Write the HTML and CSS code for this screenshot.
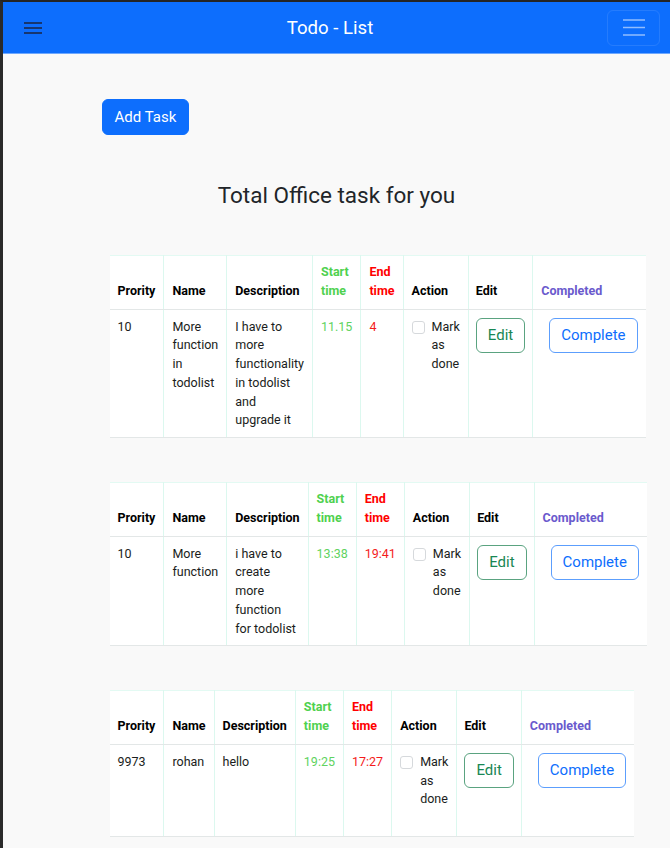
FILE: index.html
```html
<!DOCTYPE html>
<html lang="en">
<head>
<meta charset="utf-8">
<title>Todo - List</title>
<link rel="stylesheet" href="styles.css">
</head>
<body>
<nav class="navbar">
  <button class="menu-btn" aria-label="menu">
    <svg width="18" height="12" viewBox="0 0 18 12"><path d="M0 1h18M0 6h18M0 11h18" stroke="#1b2440" stroke-width="1.7" fill="none"/></svg>
  </button>
  <span class="brand">Todo - List</span>
  <button class="toggler" aria-label="toggle">
    <svg width="22" height="17" viewBox="0 0 22 17"><path d="M0 1h22M0 8.5h22M0 16h22" stroke="rgba(255,255,255,0.55)" stroke-width="1.7" fill="none"/></svg>
  </button>
</nav>

<main class="container">
  <button class="btn-add">Add Task</button>
  <h1 class="heading">Total Office task for you</h1>

  <div class="table-wrap">
    <table class="task-table">
      <thead>
        <tr>
          <th>Prority</th><th>Name</th><th>Description</th>
          <th class="c-start">Start time</th><th class="c-end">End time</th>
          <th>Action</th><th class="edit-col">Edit</th><th class="c-done">Completed</th>
        </tr>
      </thead>
      <tbody>
        <tr>
          <td>10</td><td>More function in todolist</td><td>I have to more functionality in todolist and upgrade it</td>
          <td class="c-start">11.15</td><td class="c-end">4</td>
          <td><div class="check"><span class="box"></span><span>Mark as done</span></div></td>
          <td class="edit-col"><button class="btn-edit">Edit</button></td>
          <td><button class="btn-complete">Complete</button></td>
        </tr>
      </tbody>
    </table>
  </div>

  <div class="table-wrap">
    <table class="task-table">
      <thead>
        <tr>
          <th>Prority</th><th>Name</th><th>Description</th>
          <th class="c-start">Start time</th><th class="c-end">End time</th>
          <th>Action</th><th class="edit-col">Edit</th><th class="c-done">Completed</th>
        </tr>
      </thead>
      <tbody>
        <tr>
          <td>10</td><td>More function</td><td>i have to create more function for todolist</td>
          <td class="c-start">13:38</td><td class="c-end">19:41</td>
          <td><div class="check"><span class="box"></span><span>Mark as done</span></div></td>
          <td class="edit-col"><button class="btn-edit">Edit</button></td>
          <td><button class="btn-complete">Complete</button></td>
        </tr>
      </tbody>
    </table>
  </div>

  <div class="table-wrap">
    <table class="task-table">
      <thead>
        <tr>
          <th>Prority</th><th>Name</th><th>Description</th>
          <th class="c-start">Start time</th><th class="c-end">End time</th>
          <th>Action</th><th class="edit-col">Edit</th><th class="c-done">Completed</th>
        </tr>
      </thead>
      <tbody>
        <tr class="tall">
          <td>9973</td><td>rohan</td><td>hello</td>
          <td class="c-start">19:25</td><td class="c-end">17:27</td>
          <td><div class="check"><span class="box"></span><span>Mark as done</span></div></td>
          <td class="edit-col"><button class="btn-edit">Edit</button></td>
          <td><button class="btn-complete">Complete</button></td>
        </tr>
      </tbody>
    </table>
  </div>
</main>
</body>
</html>
```

FILE: styles.css
```css
* { box-sizing: border-box; }

html { background: #f9f9f9; }

body {
  margin: 0;
  min-height: 100vh;
  background: #f9f9f9;
  border-top: 2px solid #242424;
  border-left: 3px solid #2a2a2a;
  font-family: Roboto, "Liberation Sans", Arial, sans-serif;
  color: #212529;
}

.navbar {
  display: flex;
  align-items: center;
  justify-content: space-between;
  height: 52px;
  padding: 0 10px 0 21px;
  background: #0d6efd;
  border-bottom: 1px solid #6ea8fe;
}

.menu-btn {
  width: 29px;
  height: 30px;
  padding: 0;
  border: 0;
  background: transparent;
  display: flex;
  align-items: center;
  justify-content: flex-start;
}

.menu-btn svg { display: block; }

.brand {
  color: #ffffff;
  font-size: 18.6px;
  line-height: 24px;
}

.toggler {
  width: 53px;
  height: 36px;
  padding: 0;
  border: 1px solid rgba(255, 255, 255, 0.1);
  border-radius: 6px;
  background: transparent;
  display: flex;
  align-items: center;
  justify-content: center;
}

.toggler svg { display: block; }

.container {
  width: 470px;
  margin: 0 auto;
  padding-top: 45px;
  padding-bottom: 40px;
}

.btn-add {
  display: block;
  height: 36px;
  padding: 6px 12px;
  font-family: inherit;
  font-size: 15px;
  line-height: 22px;
  color: #ffffff;
  background: #0d6efd;
  border: 1px solid #0d6efd;
  border-radius: 6px;
}

.heading {
  margin: 47px 0 46px;
  text-align: center;
  font-size: 22.5px;
  line-height: 27px;
  font-weight: 400;
  color: #212529;
}

.table-wrap {
  width: 485px;
  margin: 0 0 44px 8px;
  border-bottom: 2px solid #cff0e6;
}

.task-table {
  width: 100%;
  border-collapse: collapse;
  background: #ffffff;
  font-size: 12.5px;
  line-height: 18.75px;
  color: #1a1d20;
  margin-bottom: -2px;
  border-top: 1px solid #e3faf3;
  border-bottom: 1px solid #e6e8e8;
}

.task-table th,
.task-table td {
  padding: 8px;
  text-align: left;
  border-right: 1px solid #dcf8ef;
  border-bottom: 1px solid #e3e7e7;
}

.task-table th:last-child,
.task-table td:last-child {
  border-right: 0;
}

.task-table th {
  padding-top: 7px;
  vertical-align: bottom;
  font-weight: 700;
  color: #000;
}

.task-table td {
  padding-bottom: 7px;
  vertical-align: top;
}

.task-table .edit-col {
  padding-left: 7px;
  padding-right: 7px;
}

.task-table th.c-start { color: #4fd14f; }
.task-table th.c-end { color: #ff0000; }
.task-table th.c-done { color: #6a5acd; }
.task-table td.c-start { color: #5fd35f; }
.task-table td.c-end { color: #f41c1c; }

.tall { height: 92px; }

.check {
  display: flex;
  gap: 7px;
  align-items: flex-start;
}

.box {
  flex: none;
  width: 13px;
  height: 13px;
  margin-top: 3px;
  border: 1px solid #d6d9dc;
  border-radius: 3px;
  background: #fff;
}

.btn-edit,
.btn-complete {
  font-family: inherit;
  font-size: 15px;
  line-height: 21px;
  padding: 6px 11px;
  background: #ffffff;
  border-radius: 6px;
  white-space: nowrap;
}

.btn-edit {
  color: #198754;
  border: 1px solid #5aa380;
}

.btn-complete {
  margin-left: 8px;
  color: #0d6efd;
  border: 1px solid #5c9efd;
}
```
